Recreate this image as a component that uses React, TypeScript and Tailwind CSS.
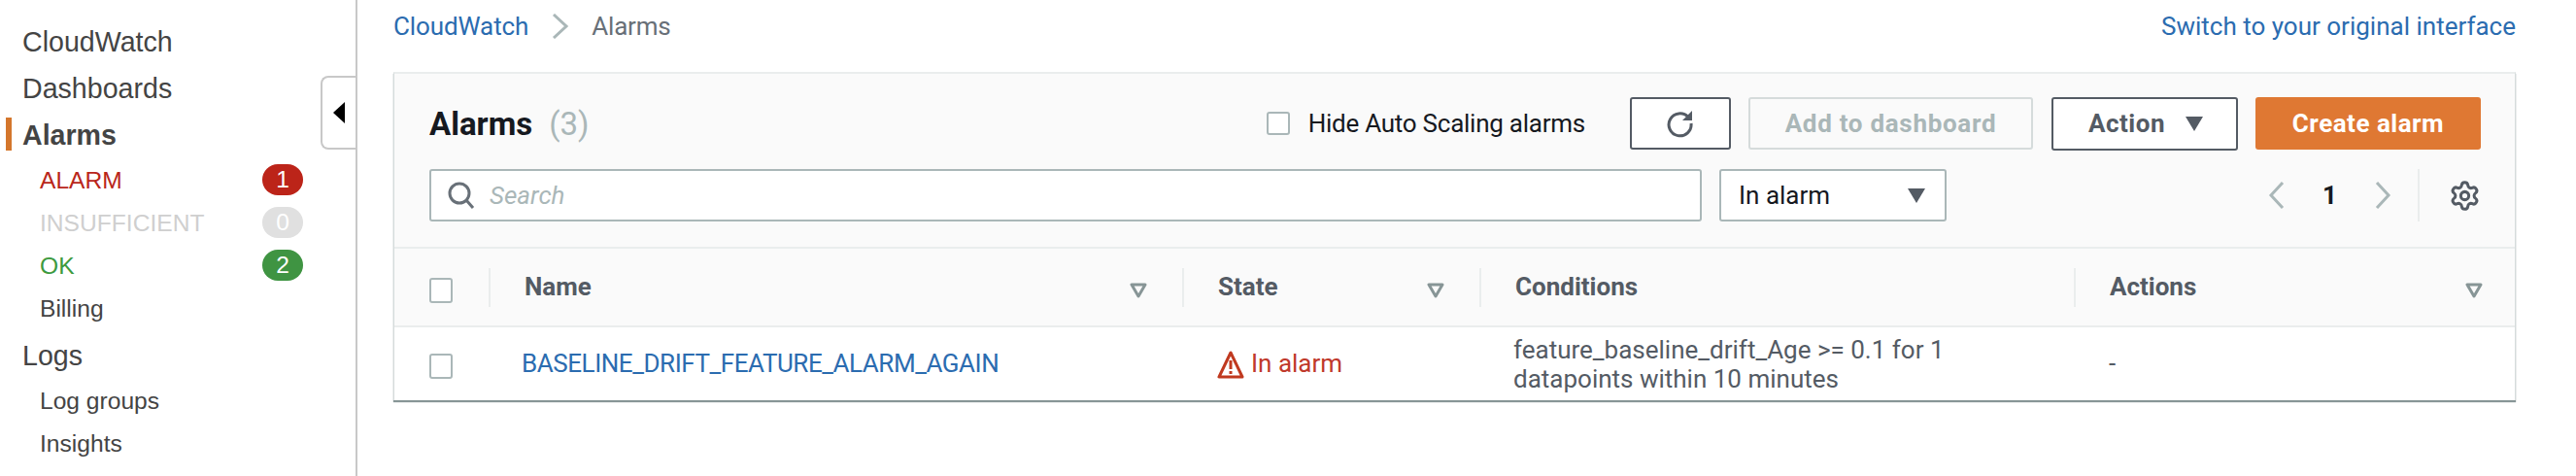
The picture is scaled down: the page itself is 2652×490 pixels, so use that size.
import React from 'react';
import { Settings } from 'lucide-react';

const FilterIcon = () => (
  <svg width="18" height="16" viewBox="0 0 18 16" className="shrink-0">
    <path d="M2 2h14L9 14z" fill="none" stroke="#879596" strokeWidth="3" strokeLinejoin="round" />
  </svg>
);

const Caret = ({ color = '#545b64' }: { color?: string }) => (
  <svg width="20" height="16" viewBox="0 0 20 16" className="shrink-0">
    <path d="M1 1h18L10 16z" fill={color} />
  </svg>
);

const Checkbox = ({ tall }: { tall?: boolean }) => (
  <div
    className={`w-[24px] ${tall ? 'h-[26px]' : 'h-[24px]'} rounded-[3px] border-2 border-[#aab7b8] bg-white shrink-0`}
  />
);

const Chevron = ({ dir }: { dir: 'left' | 'right' }) => (
  <svg width="18" height="30" viewBox="0 0 18 30">
    <path
      d={dir === 'left' ? 'M15 2 3 15l12 13' : 'M3 2l12 13L3 28'}
      fill="none"
      stroke="#aab7b8"
      strokeWidth="3"
    />
  </svg>
);

const SideItem = ({ label, bold }: { label: string; bold?: boolean }) => (
  <div className={`h-[48px] pl-[23px] flex items-center text-[28.6px] ${bold ? 'font-bold' : ''}`}>
    {label}
  </div>
);

const SubItem = ({
  label,
  color,
  count,
  badge,
}: {
  label: string;
  color?: string;
  count?: number;
  badge?: string;
}) => (
  <div className="h-[44px] pl-[41px] pr-[54px] flex items-center justify-between text-[24.6px]" style={{ color }}>
    <span className="translate-y-[1px]">{label}</span>
    {count !== undefined && (
      <span
        className="w-[42px] h-[32px] rounded-full flex items-center justify-center text-white"
        style={{ backgroundColor: badge }}
      >
        {count}
      </span>
    )}
  </div>
);

const Sidebar = () => (
  <aside className="relative w-[368px] h-full shrink-0 border-r-2 border-[#c8c8c8] pt-[19px] text-[#444] font-['Liberation_Sans',sans-serif]">
    <SideItem label="CloudWatch" />
    <SideItem label="Dashboards" />
    <div className="relative">
      <div className="absolute left-[6px] top-[6px] w-[6px] h-[34px] bg-[#d4762c]" />
      <SideItem label="Alarms" bold />
    </div>
    <SubItem label="ALARM" color="#b9261a" count={1} badge="#bc2419" />
    <SubItem label="INSUFFICIENT" color="#cfcfcf" count={0} badge="#e0e0e0" />
    <SubItem label="OK" color="#3d9a3f" count={2} badge="#3f9442" />
    <SubItem label="Billing" />
    <div className="mt-[3px]">
      <SideItem label="Logs" />
    </div>
    <SubItem label="Log groups" />
    <SubItem label="Insights" />
    <div className="absolute right-0 top-[78px] w-[36px] h-[76px] rounded-l-[8px] border-2 border-r-0 border-[#c8c8c8] bg-white flex items-center justify-center">
      <div className="w-0 h-0 border-y-[11px] border-y-transparent border-r-[12px] border-r-black" />
    </div>
  </aside>
);

const HeaderCell = ({ label, filter, last }: { label: string; filter?: boolean; last?: boolean }) => (
  <div className="h-[40px] border-l-2 border-[#eaeded] pl-[35px] flex items-center justify-between">
    <span className="font-bold text-[#545b64] text-[26px]">{label}</span>
    {filter && (
      <span className={`mt-[6px] ${last ? 'mr-[33px]' : 'mr-[36px]'}`}>
        <FilterIcon />
      </span>
    )}
  </div>
);

export default function App() {
  return (
    <div className="w-[2652px] h-[490px] overflow-hidden bg-white flex font-['Roboto',sans-serif] text-[26px]">
      <Sidebar />
      <main className="flex-1 pl-[37px] pr-[62px]">
        <div className="h-[54px] mb-[20px] flex items-center justify-between">
          <div className="flex items-center">
            <span className="text-[#2b6cb0] tracking-[-0.1px]">CloudWatch</span>
            <svg width="18" height="26" viewBox="0 0 18 26" className="ml-[24px] mr-[23px]">
              <path d="M2 1l13 12L2 25" fill="none" stroke="#aab7b8" strokeWidth="3" />
            </svg>
            <span className="text-[#687078] tracking-[-0.2px]">Alarms</span>
          </div>
          <span className="text-[#2b6cb0]">Switch to your original interface</span>
        </div>

        <section className="border-x border-[#d5dbdb] border-t-2 border-t-[#eaeded] shadow-[0_2px_1px_#879596] bg-[#fafafa]">
          <div className="pl-[36px] pr-[35px] pt-[24px] h-[178px]">
            <div className="flex items-center h-[54px]">
              <h1 className="font-bold text-[33px] text-[#16191f] translate-y-[1px]">Alarms</h1>
              <span className="ml-[17px] text-[33px] text-[#aab7b8] translate-y-[1px]">(3)</span>
              <div className="ml-auto flex items-center">
                <Checkbox />
                <span className="ml-[19px] text-[#16191f] tracking-[-0.25px]">Hide Auto Scaling alarms</span>
                <button className="ml-[46px] w-[104px] h-[54px] rounded-[3px] border-2 border-[#545b64] bg-white flex items-center justify-center">
                  <svg width="30" height="30" viewBox="0 0 30 30">
                    <path d="M23 8.5A11.5 11.5 0 1 0 26 15" fill="none" stroke="#545b64" strokeWidth="3" />
                    <path d="M27 2v10H17z" fill="#545b64" />
                  </svg>
                </button>
                <button className="ml-[18px] w-[293px] h-[54px] rounded-[3px] border-2 border-[#d5dbdb] font-bold text-[#aab7b8] tracking-[0.7px]">
                  Add to dashboard
                </button>
                <button className="ml-[19px] w-[192px] h-[55px] rounded-[3px] border-2 border-[#545b64] bg-white font-bold text-[#545b64] tracking-[0.5px] flex items-center justify-center gap-[20px] pl-[3px]">
                  Action
                  <Caret />
                </button>
                <button className="ml-[18px] w-[232px] h-[54px] rounded-[3px] bg-[#df7833] font-bold text-white tracking-[0.5px]">
                  Create alarm
                </button>
              </div>
            </div>
            <div className="flex items-center mt-[20px] h-[54px]">
              <div className="w-[1310px] h-[54px] rounded-[3px] border-2 border-[#aab7b8] bg-white flex items-center pl-[17px]">
                <svg width="28" height="28" viewBox="0 0 28 28">
                  <circle cx="12" cy="12" r="10" fill="none" stroke="#687078" strokeWidth="3" />
                  <path d="M19 19l7 8" stroke="#687078" strokeWidth="3" />
                </svg>
                <span className="ml-[15px] italic text-[#aab7b8]">Search</span>
              </div>
              <div className="ml-[18px] w-[234px] h-[54px] rounded-[3px] border-2 border-[#aab7b8] bg-white flex items-center justify-between pl-[18px] pr-[19px] text-[#16191f]">
                In alarm
                <Caret />
              </div>
              <div className="ml-auto flex items-center h-full">
                <Chevron dir="left" />
                <span className="mx-[38px] font-bold text-[#16191f]">1</span>
                <Chevron dir="right" />
                <div className="ml-[27px] h-full border-l-2 border-[#eaeded]" />
                <Settings className="ml-[30px] text-[#545b64]" size={33} strokeWidth={2.2} />
              </div>
            </div>
          </div>

          <div className="grid grid-cols-[97px_714px_306px_612px_1fr] items-center h-[81px] border-t-2 border-[#eaeded]">
            <div className="pl-[36px] translate-y-[3px]">
              <Checkbox tall />
            </div>
            <HeaderCell label="Name" filter />
            <HeaderCell label="State" filter />
            <HeaderCell label="Conditions" />
            <HeaderCell label="Actions" filter last />
          </div>

          <div className="grid grid-cols-[97px_714px_306px_612px_1fr] items-center h-[77px] border-t-2 border-[#eaeded] bg-white">
            <div className="pl-[36px] translate-y-[2px]">
              <Checkbox tall />
            </div>
            <div className="pl-[34px] text-[#2b6cb0] tracking-[-0.45px]">BASELINE_DRIFT_FEATURE_ALARM_AGAIN</div>
            <div className="pl-[36px] flex items-center gap-[7px] text-[#c0392b]">
              <svg width="28" height="30" viewBox="0 0 28 30">
                <path d="M14 3 2 28h24z" fill="none" stroke="#c0391f" strokeWidth="3" strokeLinejoin="round" />
                <path d="M14 11v9M14 22v3" stroke="#c0391f" strokeWidth="3" />
              </svg>
              In alarm
            </div>
            <div className="pl-[35px] pr-[90px] leading-[30px] text-[#545b64]">
              feature_baseline_drift_Age &gt;= 0.1 for 1 datapoints within 10 minutes
            </div>
            <div className="pl-[36px] text-[#545b64]">-</div>
          </div>
        </section>
      </main>
    </div>
  );
}
